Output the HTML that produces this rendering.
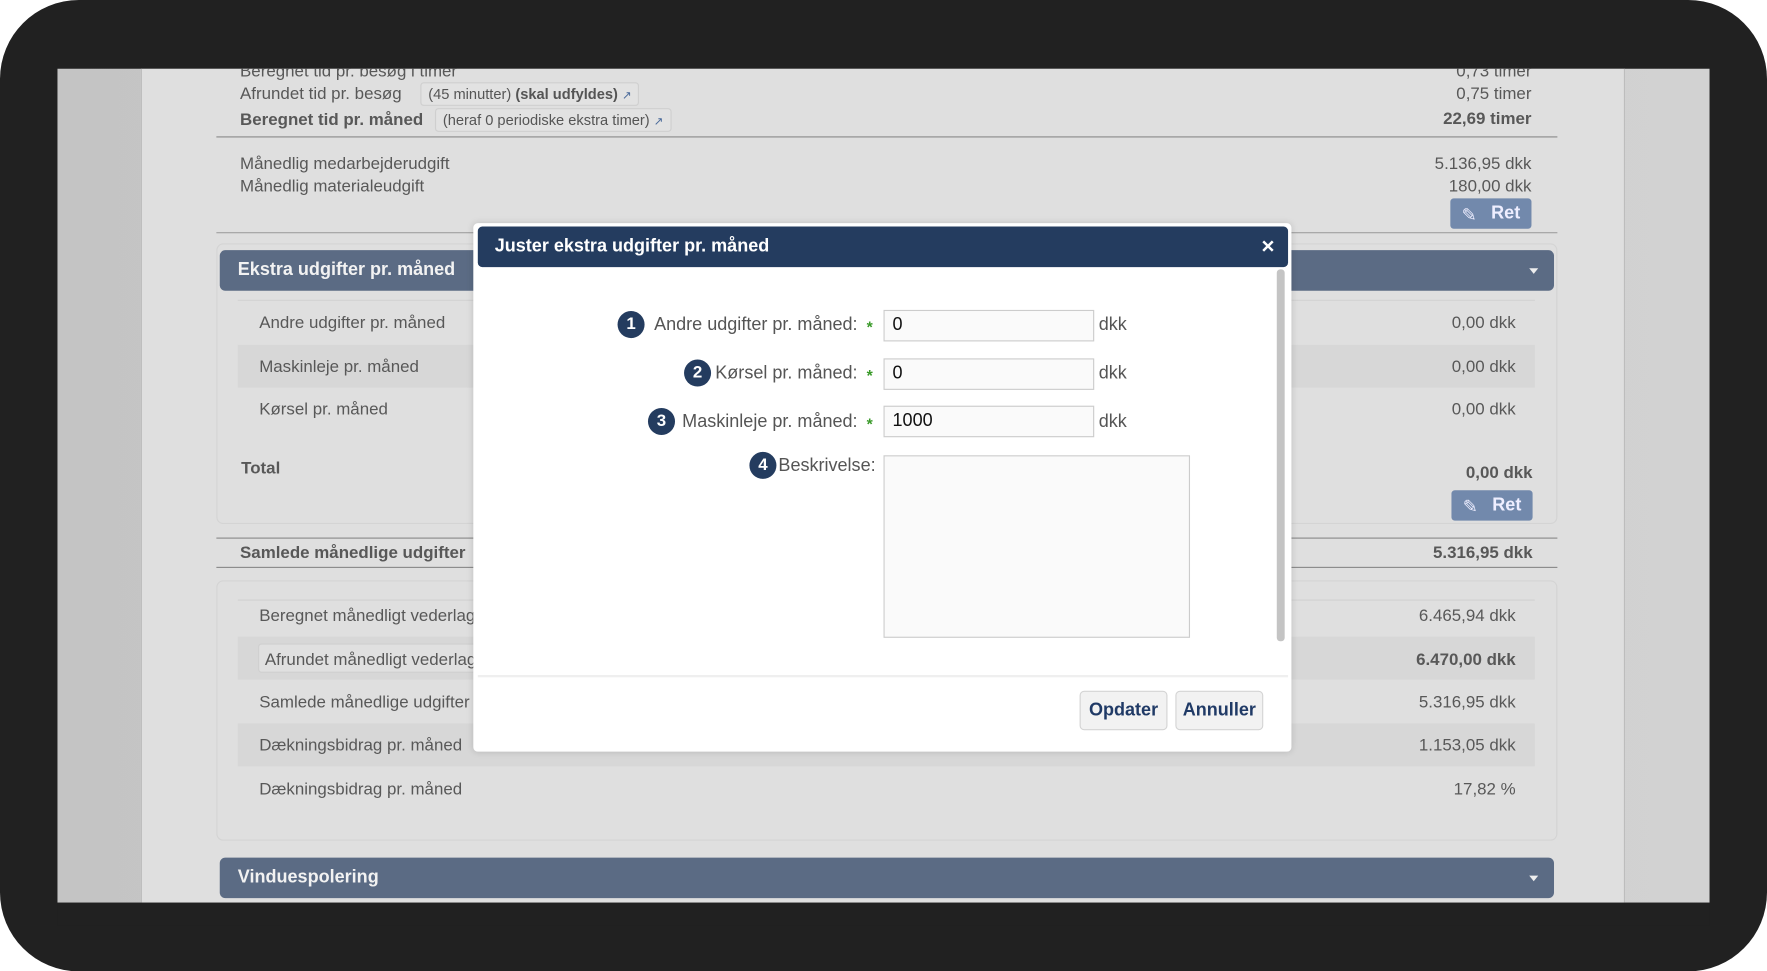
<!DOCTYPE html>
<html><head><meta charset="utf-8"><style>
*{margin:0;padding:0;box-sizing:border-box}
html,body{width:1767px;height:971px;overflow:hidden;background:#fff;font-family:"Liberation Sans",sans-serif}
#w{position:absolute;left:0;top:0;width:1568px;height:862px;transform:scale(1.12691);transform-origin:0 0}
.a{position:absolute;white-space:nowrap}
.frame{left:0;top:0;width:1568px;height:862px;background:#212121;border-radius:70px}
.screen{left:51px;top:61px;width:1466px;height:740px;background:linear-gradient(90deg,#c4c4c4,#d2d2d2);overflow:hidden}
.content{left:74px;top:0;width:1317px;height:740px;background:#dfdfdf;border-left:1px solid #bdbdbd;border-right:1px solid #bdbdbd}
.t{font-size:15px;color:#585858}
.b{font-weight:bold}
.r{text-align:right}
.hl{height:1px;background:#8a8a8a}
.tag{border:1px solid #cfcfcf;background:#e2e2e2;border-radius:3px;font-size:13px;color:#555;padding:2px 6px}
.bar{background:#5b6b84;border-radius:5px;color:#f2f2f2;font-weight:bold;font-size:16px;padding-left:16px;line-height:36px}
.ret{background:#7289ac;border-radius:3px;color:#eef;font-weight:bold;font-size:16px;line-height:27px;text-align:right;padding-right:10px}
.stripe{background:#d7d7d7}
.box{border:1px solid #d4d4d4;border-radius:6px}
.caret{position:absolute;right:14px;top:16px;width:0;height:0;border-left:4px solid transparent;border-right:4px solid transparent;border-top:5px solid #eee}
.dlg{left:420px;top:198px;width:726px;height:469px;background:#fff;border-radius:4px;box-shadow:0 0 6px rgba(0,0,0,.15)}
.dh{left:4px;top:3px;width:719px;height:36px;background:#243c5f;border-radius:4px;color:#fff;font-weight:bold;font-size:16px;line-height:36px;padding-left:15px}
.num{width:24px;height:24px;border-radius:12px;background:#243c5f;color:#fff;font-weight:bold;font-size:15px;text-align:center;line-height:24px}
.lab{font-size:16px;color:#555;text-align:right}
.inp{width:187px;height:28px;border:1px solid #ccc;background:#fafafa;font-size:16px;color:#111;padding-left:7px;line-height:26px}
.star{color:#3a9a2a;font-weight:bold;font-size:14px}
.btn{height:35px;border:1px solid #d4d4d4;background:#f2f2f2;border-radius:4px;color:#203a66;font-weight:bold;font-size:16px;line-height:33px;text-align:center}
</style></head><body><div id="w">
<div class="a frame"></div>
<div class="a screen">
 <div class="a content"></div>
</div>
<div style="position:absolute;left:51px;top:61px;width:1466px;height:740px;overflow:hidden">
 <div style="position:absolute;left:-51px;top:-61px;width:1568px;height:862px">
  <div class="a t" style="left:213px;top:55px">Beregnet tid pr. besøg i timer</div>
  <div class="a t r" style="left:1200px;width:159px;top:55px">0,73 timer</div>
 </div>
</div>
<div class="a t" style="left:213px;top:75px">Afrundet tid pr. besøg</div>
<div class="a tag" style="left:373px;top:73px">(45 minutter) <b>(skal udfyldes)</b> <span style="color:#4a6a9a;font-size:10px">↗</span></div>
<div class="a t r" style="left:1200px;width:159px;top:75px">0,75 timer</div>
<div class="a t b" style="left:213px;top:98px">Beregnet tid pr. måned</div>
<div class="a tag" style="left:386px;top:96px">(heraf 0 periodiske ekstra timer) <span style="color:#4a6a9a;font-size:10px">↗</span></div>
<div class="a t b r" style="left:1200px;width:159px;top:97px">22,69 timer</div>
<div class="a hl" style="left:192px;top:121px;width:1190px"></div>
<div class="a t" style="left:213px;top:137px">Månedlig medarbejderudgift</div>
<div class="a t" style="left:213px;top:157px">Månedlig materialeudgift</div>
<div class="a t r" style="left:1200px;width:159px;top:137px">5.136,95 dkk</div>
<div class="a t r" style="left:1200px;width:159px;top:157px">180,00 dkk</div>
<div class="a ret" style="left:1287px;top:176px;width:72px">Ret</div>
<div class="a" style="left:1297px;top:181px;color:#eef;font-size:16px">✎</div>
<div class="a hl" style="left:192px;top:206px;width:1190px;background:#a0a0a0"></div>
<div class="a box" style="left:192px;top:216px;width:1190px;height:249px"></div>
<div class="a bar" style="left:195px;top:222px;width:1184px">Ekstra udgifter pr. måned<div class="caret"></div></div>
<div class="a hl" style="left:211px;top:266px;width:1151px;background:#d2d2d2"></div>
<div class="a stripe" style="left:211px;top:306px;width:1151px;height:38px"></div>
<div class="a t" style="left:230px;top:278px">Andre udgifter pr. måned</div>
<div class="a t" style="left:230px;top:317px">Maskinleje pr. måned</div>
<div class="a t" style="left:230px;top:355px">Kørsel pr. måned</div>
<div class="a t b" style="left:214px;top:407px">Total</div>
<div class="a t r" style="left:1200px;width:145px;top:278px">0,00 dkk</div>
<div class="a t r" style="left:1200px;width:145px;top:317px">0,00 dkk</div>
<div class="a t r" style="left:1200px;width:145px;top:355px">0,00 dkk</div>
<div class="a t b r" style="left:1200px;width:160px;top:411px">0,00 dkk</div>
<div class="a ret" style="left:1288px;top:435px;width:72px">Ret</div>
<div class="a" style="left:1298px;top:440px;color:#eef;font-size:16px">✎</div>
<div class="a hl" style="left:192px;top:477px;width:1190px"></div>
<div class="a t b" style="left:213px;top:482px">Samlede månedlige udgifter</div>
<div class="a t b r" style="left:1200px;width:160px;top:482px">5.316,95 dkk</div>
<div class="a hl" style="left:192px;top:503px;width:1190px"></div>
<div class="a box" style="left:192px;top:515px;width:1190px;height:231px"></div>
<div class="a hl" style="left:211px;top:532px;width:1151px;background:#d2d2d2"></div>
<div class="a stripe" style="left:211px;top:565px;width:1151px;height:38px"></div>
<div class="a" style="left:229px;top:571px;width:300px;height:26px;border:1px solid #cfcfcf;border-radius:3px;background:#e0e0e0"></div>
<div class="a stripe" style="left:211px;top:642px;width:1151px;height:38px"></div>
<div class="a t" style="left:230px;top:538px">Beregnet månedligt vederlag</div>
<div class="a t" style="left:235px;top:577px">Afrundet månedligt vederlag</div>
<div class="a t" style="left:230px;top:615px">Samlede månedlige udgifter</div>
<div class="a t" style="left:230px;top:653px">Dækningsbidrag pr. måned</div>
<div class="a t" style="left:230px;top:692px">Dækningsbidrag pr. måned</div>
<div class="a t r" style="left:1200px;width:145px;top:538px">6.465,94 dkk</div>
<div class="a t b r" style="left:1200px;width:145px;top:577px">6.470,00 dkk</div>
<div class="a t r" style="left:1200px;width:145px;top:615px">5.316,95 dkk</div>
<div class="a t r" style="left:1200px;width:145px;top:653px">1.153,05 dkk</div>
<div class="a t r" style="left:1200px;width:145px;top:692px">17,82 %</div>
<div class="a bar" style="left:195px;top:761px;width:1184px">Vinduespolering<div class="caret"></div></div>
<div class="a" style="left:51px;top:801px;width:1466px;height:20px;background:#212121"></div>

<div class="a dlg">
 <div class="a dh">Juster ekstra udgifter pr. måned<span style="position:absolute;right:12px;top:0;font-size:20px">×</span></div>
 <div class="a" style="left:713px;top:41px;width:7px;height:330px;background:#c4c4c4;border-radius:3px"></div>
 <div class="a num" style="left:128px;top:78px">1</div>
 <div class="a lab" style="left:150px;top:82px;width:191px">Andre udgifter pr. måned:</div>
 <div class="a star" style="left:349px;top:84px">*</div>
 <div class="a inp" style="left:364px;top:77px">0</div>
 <div class="a lab" style="left:555px;top:82px">dkk</div>
 <div class="a num" style="left:187px;top:121px">2</div>
 <div class="a lab" style="left:150px;top:125px;width:191px">Kørsel pr. måned:</div>
 <div class="a star" style="left:349px;top:127px">*</div>
 <div class="a inp" style="left:364px;top:120px">0</div>
 <div class="a lab" style="left:555px;top:125px">dkk</div>
 <div class="a num" style="left:155px;top:164px">3</div>
 <div class="a lab" style="left:150px;top:168px;width:191px">Maskinleje pr. måned:</div>
 <div class="a star" style="left:349px;top:170px">*</div>
 <div class="a inp" style="left:364px;top:162px">1000</div>
 <div class="a lab" style="left:555px;top:168px">dkk</div>
 <div class="a num" style="left:245px;top:203px">4</div>
 <div class="a lab" style="left:150px;top:207px;width:207px">Beskrivelse:</div>
 <div class="a" style="left:364px;top:206px;width:272px;height:162px;border:1px solid #ccc;background:#fafafa"></div>
 <div class="a" style="left:4px;top:401px;width:719px;height:2px;background:#efefef"></div>
 <div class="a btn" style="left:538px;top:415px;width:78px">Opdater</div>
 <div class="a btn" style="left:623px;top:415px;width:78px">Annuller</div>
</div>
</div></body></html>
